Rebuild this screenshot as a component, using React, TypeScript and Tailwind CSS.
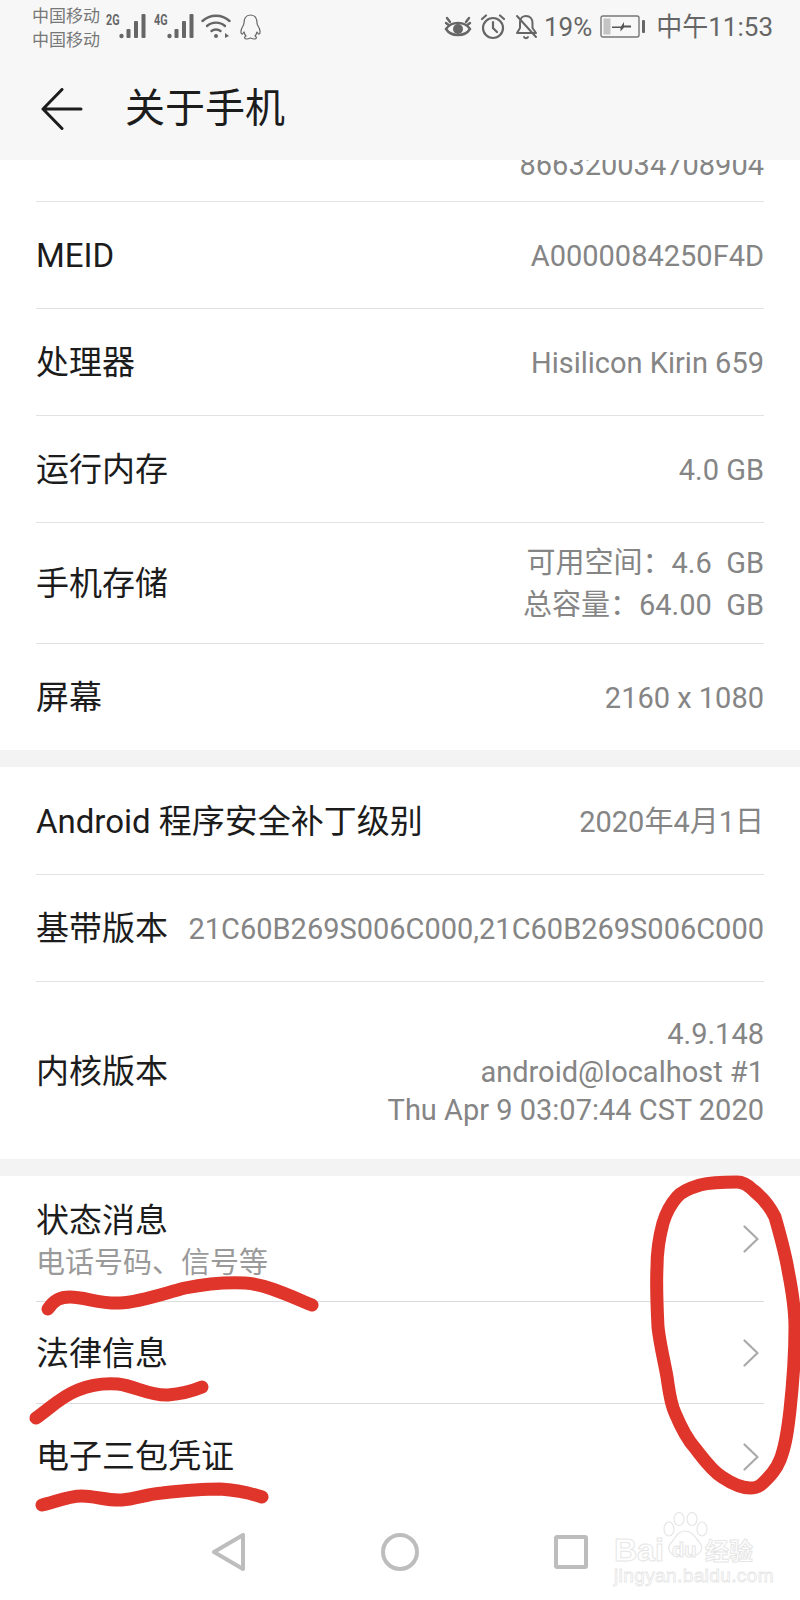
import type { ReactNode } from "react";

const FONT = "font-['Roboto','Noto_Sans_CJK_SC',sans-serif]";

function Signal({ tag }: { tag: string }) {
  return (
    <div className="relative w-[40px] h-[26px]">
      <span className="absolute left-0 top-0 text-[15px] leading-[15px] font-bold text-[#666] scale-x-[0.72] origin-left">{tag}</span>
      <svg className="absolute right-0 top-0" width="27" height="26" viewBox="0 0 27 26" fill="#666">
        <circle cx="2.5" cy="23" r="2.2" />
        <rect x="7.5" y="16" width="4" height="9" rx="1" />
        <rect x="15" y="8" width="4" height="17" rx="1" />
        <rect x="22.5" y="1" width="4" height="24" rx="1" />
      </svg>
    </div>
  );
}

function StatusBar() {
  return (
    <div className="flex h-[56px] items-start justify-between pl-[32px] pr-[27px] text-[#666]">
      <div className="flex items-start">
        <div className="mt-[4px] text-[17px] leading-[24px] text-[#777]">
          <div>中国移动</div>
          <div>中国移动</div>
        </div>
        <div className="flex gap-[8px] mt-[13px] ml-[6px]">
          <Signal tag="2G" />
          <Signal tag="4G" />
        </div>
        <svg className="mt-[13px] ml-[7px]" width="30" height="26" viewBox="0 0 30 26" fill="none" stroke="#666" strokeWidth="2.4" strokeLinecap="round">
          <path d="M1.5 8 C9 1 21 1 28.5 8" />
          <path d="M6 13 C11 8.5 19 8.5 24 13" />
          <path d="M10.5 18 C13 16 17 16 19.5 18" />
          <circle cx="15" cy="23" r="2" fill="#666" stroke="none" />
          <path d="M24 20 L28 23 L24 25 Z" fill="#666" stroke="none" />
        </svg>
        <svg className="mt-[14px] ml-[8px]" width="23" height="26" viewBox="0 0 23 26" fill="none" stroke="#666" strokeWidth="1.2" strokeLinejoin="round">
          <path d="M11.5 1 C6.5 1 5 5 5 9 C5 11 3.5 12 2.5 15 C1.5 18 2 20.5 3.5 20 L5 18 C5.5 20 6.5 21.5 7 22 C5 23 5 25 8 25 C10 25 11 24 11.5 24 C12 24 13 25 15 25 C18 25 18 23 16 22 C16.5 21.5 17.5 20 18 18 L19.5 20 C21 20.5 21.5 18 20.5 15 C19.5 12 18 11 18 9 C18 5 16.5 1 11.5 1 Z" />
        </svg>
      </div>
      <div className="flex items-center mt-[13px] h-[28px]">
        <svg width="28" height="24" viewBox="0 0 28 24" fill="none" stroke="#666" strokeWidth="2.4" strokeLinecap="round">
          <path d="M2 14 C7 6 21 6 26 14 C21 22 7 22 2 14 Z" />
          <circle cx="14" cy="14" r="5" fill="#666" stroke="none" />
          <path d="M3 3 L6 7 M25 3 L22 7 M2 8 L4 9.5 M26 8 L24 9.5" />
        </svg>
        <svg className="ml-[8px]" width="26" height="26" viewBox="0 0 26 26" fill="none" stroke="#666" strokeWidth="2.2" strokeLinecap="round">
          <circle cx="13" cy="14" r="10" />
          <path d="M13 8 V14 L17 18 M2 5 L6 1.5 M24 5 L20 1.5" />
        </svg>
        <svg className="ml-[8px]" width="24" height="26" viewBox="0 0 24 26" fill="none" stroke="#666" strokeWidth="2" strokeLinecap="round" strokeLinejoin="round">
          <path d="M6 8 C6 4 9 2 12 2 C16 2 18.5 5 18.5 9 V14 L22 19 H3 L6 14 Z" />
          <path d="M10 23 C11 24.5 13 24.5 14 23 M3 2 L22 23" />
        </svg>
        <span className="ml-[6px] text-[26px] leading-[28px]">19%</span>
        <svg className="ml-[8px]" width="47" height="24" viewBox="0 0 47 24" fill="none">
          <rect x="1" y="1" width="38" height="21" rx="2" stroke="#777" strokeWidth="1.4" />
          <rect x="3.5" y="3.5" width="7" height="16" fill="#c4c4c4" />
          <path d="M12 11.5 L21 11.5 L24 7 L24 10.5 L31 10.5 L31 12.5 L24 12.5 L20.5 16.5 L20.5 13 L12 13 Z" fill="#555" />
          <rect x="42" y="5" width="3" height="13" rx="1" fill="#666" />
        </svg>
        <span className="ml-[9px] text-[26px] leading-[28px]">中午11:53</span>
      </div>
    </div>
  );
}

function Row({ label, h, last, children }: { label: ReactNode; h: string; last?: boolean; children?: ReactNode }) {
  return (
    <div className={`flex items-center justify-between pt-[2px] ${h} ${last ? "" : "border-b border-[#e2e2e2]"}`}>
      <div className="text-[33px] leading-[40px] text-[#1c1c1c] whitespace-nowrap">{label}</div>
      <div className="text-[29px] leading-[38px] text-[#858585] text-right whitespace-nowrap">{children}</div>
    </div>
  );
}

function Chevron() {
  return (
    <svg width="16" height="28" viewBox="0 0 16 28" fill="none" stroke="#aaaaaa" strokeWidth="2.2" strokeLinecap="round" strokeLinejoin="round">
      <path d="M1.5 1.5 L14.5 14 L1.5 26.5" />
    </svg>
  );
}

function LinkRow({ title, sub, h, pad, last }: { title: string; sub?: string; h: string; pad: string; last?: boolean }) {
  return (
    <div className={`flex items-center justify-between pr-[5px] ${h} ${last ? "" : "border-b border-[#dcdcdc]"}`}>
      <div className={pad}>
        <div className="text-[33px] leading-[40px] text-[#1c1c1c]">{title}</div>
        {sub && <div className="mt-[3px] text-[29px] leading-[38px] text-[#9a9a9a]">{sub}</div>}
      </div>
      <Chevron />
    </div>
  );
}

function Scribbles() {
  return (
    <svg className="absolute left-0 top-0 pointer-events-none" width="800" height="1600" viewBox="0 0 800 1600" fill="none" stroke="#e0352b" strokeWidth="13" strokeLinecap="round" strokeLinejoin="round">
      <path d="M48 1309 C54 1300 60 1297 70 1297 C85 1297 100 1304 120 1303 C140 1302 165 1293 185 1288 C205 1284 225 1282 245 1283 C265 1284 290 1296 312 1305" />
      <path d="M36 1418 C50 1408 62 1396 78 1390 C90 1385 105 1383 118 1384 C135 1386 150 1396 168 1395 C180 1394 190 1392 202 1387" />
      <path d="M42 1505 C55 1502 68 1496 82 1496 C95 1496 108 1501 122 1500 C135 1499 148 1494 162 1493 C180 1491 200 1489 220 1489 C235 1490 250 1493 262 1497" />
      <path d="M737 1182 C725 1182 712 1182 700 1185 C690 1188 682 1191 677 1197 C670 1205 666 1213 663 1223 C659 1238 657 1252 657 1267 C656 1287 657 1307 658 1327 C660 1345 664 1360 667 1377 C669 1390 670 1402 675 1413 C680 1425 686 1438 695 1448 C703 1458 711 1470 722 1477 C731 1483 741 1488 750 1488 C756 1488 759 1487 763 1483 C770 1476 776 1470 780 1460 C786 1445 788 1428 790 1410 C793 1382 795 1355 795 1327 C795 1307 792 1290 788 1270 C785 1252 780 1235 775 1217 C770 1207 762 1197 753 1190 C748 1185 743 1182 737 1182 Z" />
    </svg>
  );
}

function Watermark() {
  return (
    <div className="absolute left-[614px] top-[1512px] w-[158px] h-[76px] font-['Liberation_Sans',sans-serif]">
      <svg className="absolute left-[48px] top-[0px]" width="46" height="48" viewBox="0 0 46 48" fill="#ffffff" stroke="#e6e6e6" strokeWidth="1.2">
        <ellipse cx="7" cy="17" rx="5" ry="7" />
        <ellipse cx="17" cy="7" rx="5" ry="6.5" />
        <ellipse cx="30" cy="7" rx="5" ry="6.5" />
        <ellipse cx="40" cy="17" rx="5" ry="7" />
        <path d="M23 19 C31 19 34 27 38 31 C42 36 38 44 31 43 C27 42 19 42 15 43 C8 44 4 36 9 31 C13 27 15 19 23 19 Z" />
      </svg>
      <span className="absolute left-0 top-[24px] text-[32px] leading-[28px] font-bold text-white [-webkit-text-stroke:1px_#e6e6e6]">Bai</span>
      <span className="absolute left-[58px] top-[27px] text-[20px] leading-[22px] font-bold text-white [-webkit-text-stroke:1px_#e6e6e6]">du</span>
      <span className="absolute left-[91px] top-[24px] font-['Noto_Sans_CJK_SC',sans-serif] text-[24px] leading-[28px] font-bold text-white [-webkit-text-stroke:1px_#e6e6e6]">经验</span>
      <span className="absolute left-0 top-[53px] text-[19px] leading-[22px] tracking-[0.4px] text-white [-webkit-text-stroke:0.8px_#e6e6e6]">jingyan.baidu.com</span>
    </div>
  );
}

export default function App() {
  return (
    <div className={`relative flex flex-col w-[800px] h-[1600px] overflow-hidden bg-white ${FONT}`}>
      <header className="bg-[#f7f7f7] h-[160px] shrink-0 relative z-10">
        <StatusBar />
        <div className="flex items-center h-[104px] pl-[41px] pt-[1px]">
          <svg width="42" height="42" viewBox="0 0 42 42" fill="none" stroke="#1c1c1c" strokeWidth="3" strokeLinecap="round" strokeLinejoin="round">
            <path d="M40 21 H2 M21 1.5 L2 21 L21 40.5" />
          </svg>
          <h1 className="ml-[42px] text-[40px] leading-[48px] text-[#1c1c1c]">关于手机</h1>
        </div>
      </header>

      <section className="px-[36px]">
        <div className="flex items-end justify-end h-[42px] overflow-hidden border-b border-[#e2e2e2] pb-[17px] text-[29px] leading-[38px] text-[#858585]">
          866320034708904
        </div>
        <Row label="MEID" h="h-[107px]">A0000084250F4D</Row>
        <Row label="处理器" h="h-[107px]">Hisilicon Kirin 659</Row>
        <Row label="运行内存" h="h-[107px]">4.0 GB</Row>
        <Row label="手机存储" h="h-[121px]">
          <div className="leading-[42px]">可用空间：4.6&nbsp; GB</div>
          <div className="leading-[42px]">总容量：64.00&nbsp; GB</div>
        </Row>
        <Row label="屏幕" h="h-[106px]" last>2160 x 1080</Row>
      </section>

      <div className="h-[17px] shrink-0 bg-[#f3f3f3]" />

      <section className="px-[36px]">
        <Row label="Android 程序安全补丁级别" h="h-[108px]">2020年4月1日</Row>
        <Row label="基带版本" h="h-[107px]">21C60B269S006C000,21C60B269S006C000</Row>
        <Row label="内核版本" h="h-[177px]" last>
          <div>4.9.148</div>
          <div>android@localhost #1</div>
          <div>Thu Apr 9 03:07:44 CST 2020</div>
        </Row>
      </section>

      <div className="h-[17px] shrink-0 bg-[#f3f3f3]" />

      <section className="px-[36px]">
        <LinkRow title="状态消息" sub="电话号码、信号等" h="h-[126px]" pad="pt-[6px]" />
        <LinkRow title="法律信息" h="h-[102px]" pad="pt-[3px]" />
        <LinkRow title="电子三包凭证" h="h-[105px]" pad="pt-0" last />
      </section>

      <nav className="flex-1 flex items-center justify-center gap-[135px] pb-[5px]">
        <svg width="34" height="38" viewBox="0 0 34 38" fill="none" stroke="#bdbdbd" strokeWidth="4" strokeLinejoin="round">
          <path d="M31 2 V36 L2 19 Z" />
        </svg>
        <svg width="38" height="38" viewBox="0 0 38 38" fill="none" stroke="#bdbdbd" strokeWidth="4">
          <circle cx="19" cy="19" r="17" />
        </svg>
        <svg width="34" height="34" viewBox="0 0 34 34" fill="none" stroke="#bdbdbd" strokeWidth="4" strokeLinejoin="round">
          <rect x="2" y="2" width="30" height="30" rx="1" />
        </svg>
      </nav>

      <Scribbles />
      <Watermark />
    </div>
  );
}
